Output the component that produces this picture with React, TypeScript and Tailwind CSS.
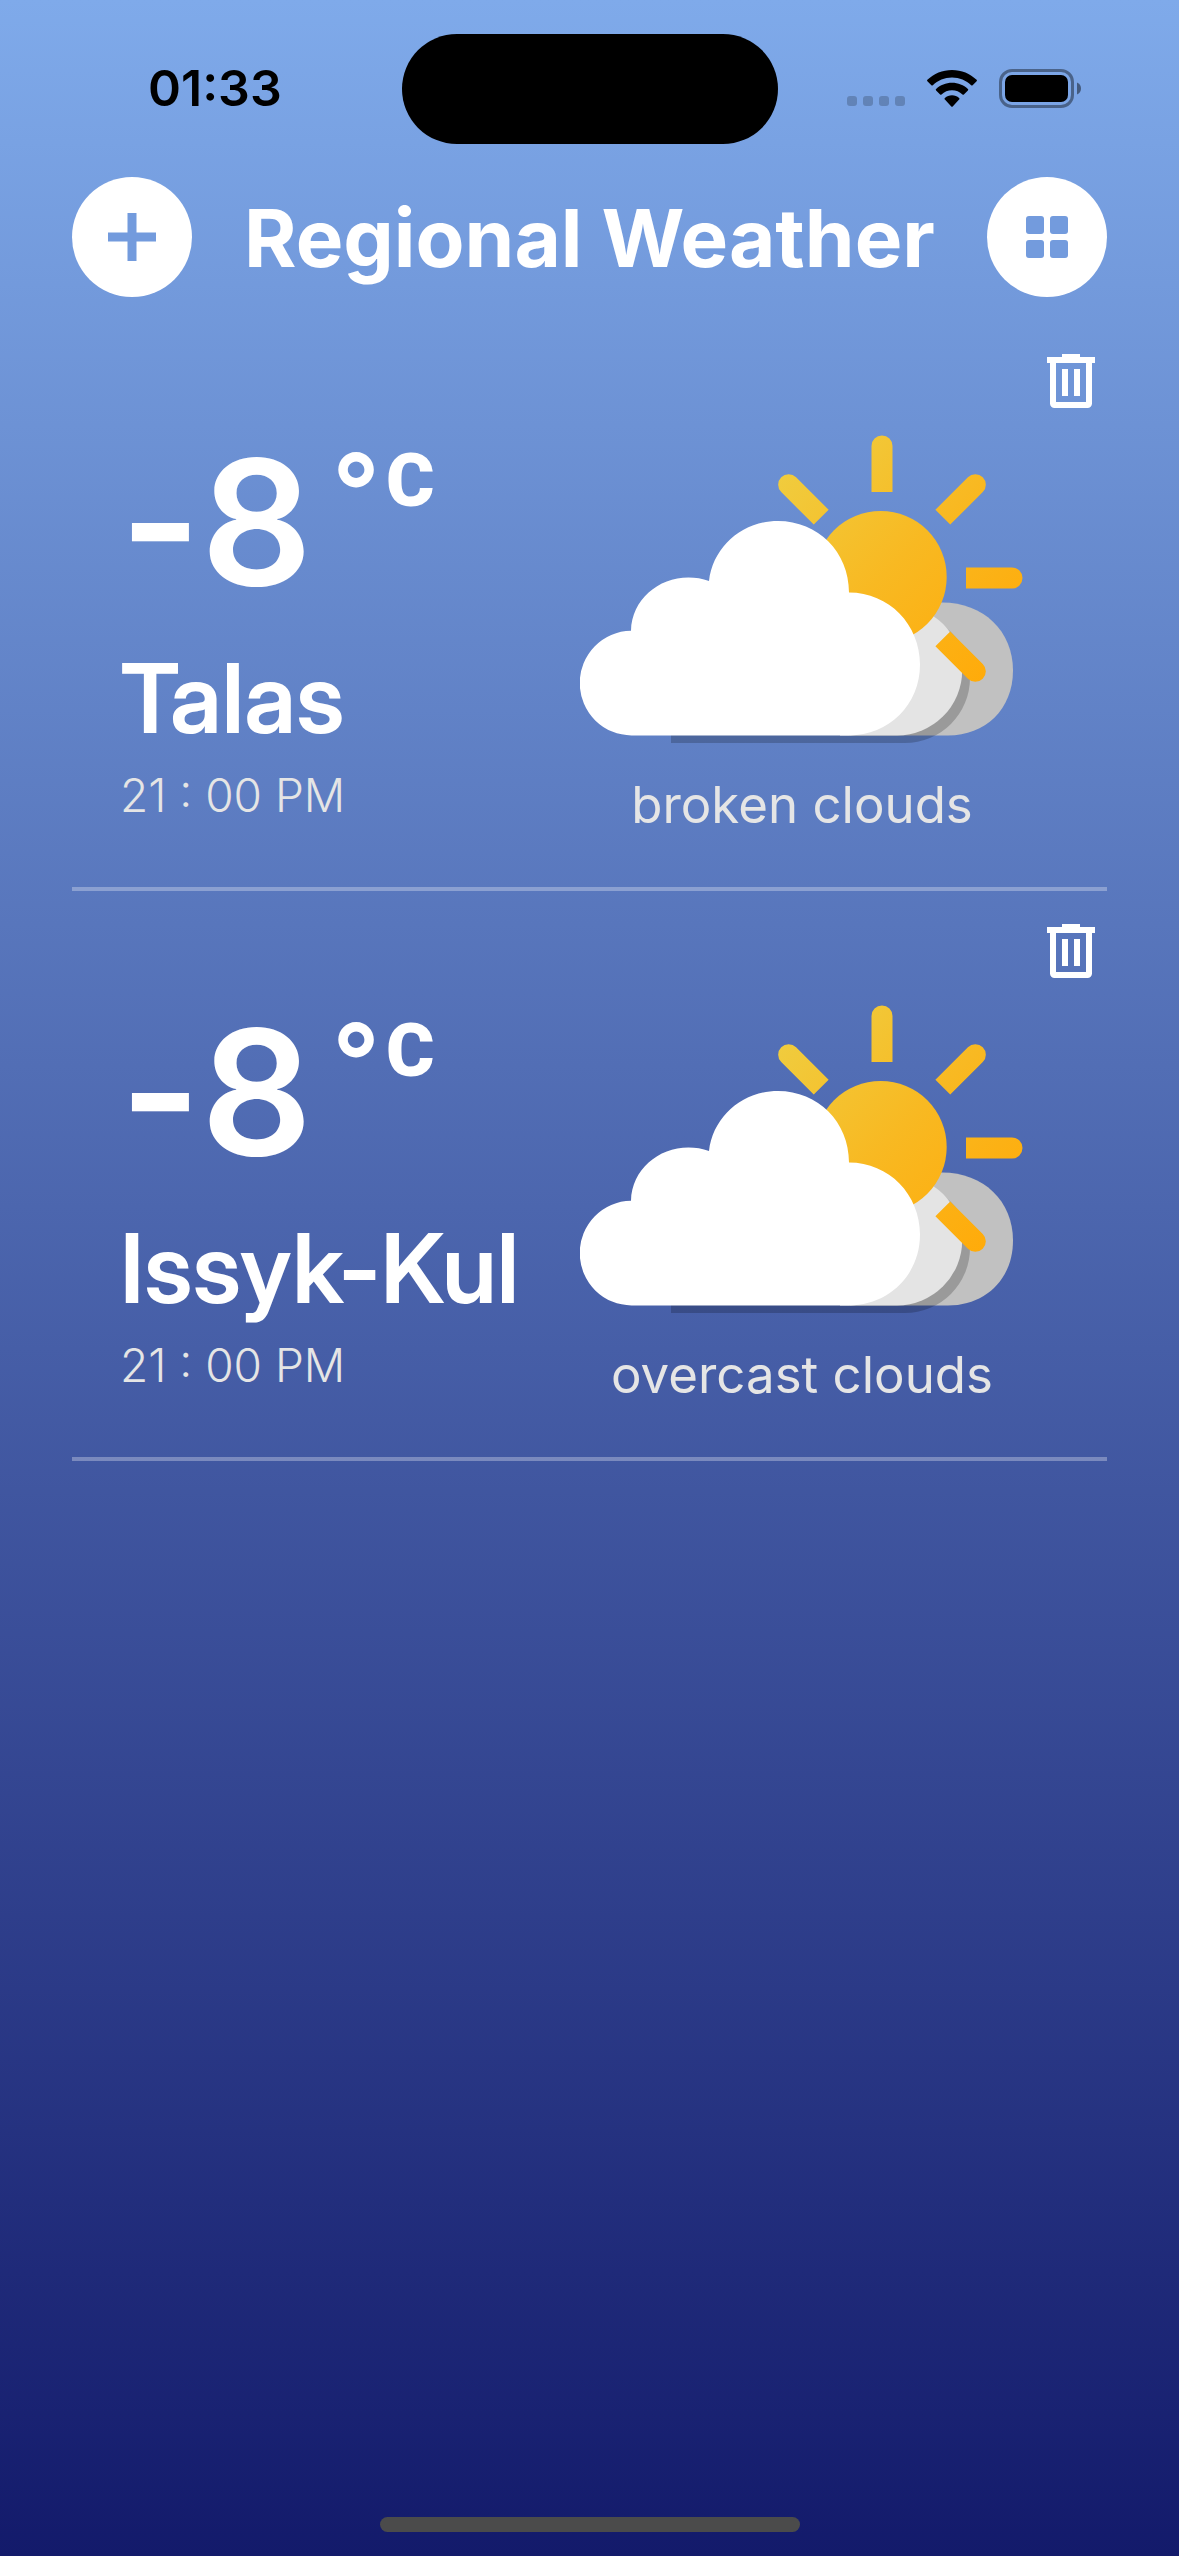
import React from "react";

type Region = { city: string; temp: number; time: string; sky: string };

const regions: Region[] = [
  { city: "Talas", temp: -8, time: "21 : 00 PM", sky: "broken clouds" },
  { city: "Issyk-Kul", temp: -8, time: "21 : 00 PM", sky: "overcast clouds" },
];

function WifiIcon() {
  return (
    <svg viewBox="0 0 50 37" className="h-[37px] w-[50px]" fill="currentColor" aria-hidden="true">
      <path d="M25 0C15.500 0 6.800 3.700 0.400 9.800a1 1 0 0 0 0 1.400l4 4a1 1 0 0 0 1.400 0C10.800 10.500 17.500 7.600 25 7.600s14.200 2.900 19.200 7.600a1 1 0 0 0 1.400 0l4-4a1 1 0 0 0 0-1.400C43.200 3.700 34.500 0 25 0z" />
      <path d="M25 12.700c-6.100 0-11.700 2.300-15.900 6.200a1 1 0 0 0 0 1.500l4 4a1 1 0 0 0 1.400 0c2.800-2.500 6.500-4.100 10.500-4.100s7.700 1.600 10.500 4.100a1 1 0 0 0 1.400 0l4-4a1 1 0 0 0 0-1.500c-4.200-3.900-9.800-6.200-15.900-6.200z" />
      <path d="M25 25.300c-2.700 0-5.200 1-7.100 2.600a1 1 0 0 0 0 1.500l6.400 7a1 1 0 0 0 1.400 0l6.400-7a1 1 0 0 0 0-1.500c-1.900-1.600-4.400-2.600-7.100-2.600z" />
    </svg>
  );
}

function BatteryIcon() {
  return (
    <svg viewBox="0 0 82 39" className="h-[39px] w-[82px]" aria-hidden="true">
      <rect x="1.500" y="1.500" width="72" height="36" rx="11.500" fill="none" stroke="#000" strokeOpacity="0.4" strokeWidth="3" />
      <rect x="6" y="6" width="63" height="27" rx="7" />
      <path d="M78 13.500c2.500 1 4 3.300 4 6s-1.500 5-4 6z" fillOpacity="0.45" />
    </svg>
  );
}

function StatusBar() {
  return (
    <div className="grid h-[177px] grid-cols-[1fr_376px_1fr] items-start pt-[34px] text-black">
      <div className="flex h-[108px] items-center pl-[148px] text-[50px] leading-[50px] font-semibold">
        01:33
      </div>
      <div className="h-[110px] rounded-full bg-black" />
      <div className="flex h-[108px] items-center justify-end pr-[98px]">
        <div className="mt-[26px] mr-[22px] flex gap-[6px]">
          {[0, 1, 2, 3].map((n) => (
            <span key={n} className="size-[10px] rounded-[3px] bg-black/20" />
          ))}
        </div>
        <WifiIcon />
        <div className="w-[22px]" />
        <BatteryIcon />
      </div>
    </div>
  );
}

function Header() {
  return (
    <header className="flex items-center justify-between px-[72px]">
      <button
        type="button"
        aria-label="Add region"
        className="flex size-[120px] items-center justify-center rounded-full bg-white text-[#739bdd]"
      >
        <svg viewBox="0 0 48 48" className="size-[48px]" fill="currentColor" aria-hidden="true">
          <path d="M19.500 0h9v19.500H48v9H28.500V48h-9V28.500H0v-9h19.500z" />
        </svg>
      </button>
      <h1 className="pt-[2px] text-[80px] leading-[100px] font-bold whitespace-nowrap text-white">
        Regional Weather
      </h1>
      <button
        type="button"
        aria-label="Grid view"
        className="flex size-[120px] items-center justify-center rounded-full bg-white text-[#739bdd]"
      >
        <svg viewBox="0 0 42 42" className="size-[42px]" fill="currentColor" aria-hidden="true">
          <rect width="18" height="18" rx="3" />
          <rect x="24" width="18" height="18" rx="3" />
          <rect y="24" width="18" height="18" rx="3" />
          <rect x="24" y="24" width="18" height="18" rx="3" />
        </svg>
      </button>
    </header>
  );
}

function TrashIcon() {
  return (
    <svg viewBox="0 0 16 18" className="h-[54px] w-[48px]" fill="currentColor" aria-hidden="true">
      <path
        fillRule="evenodd"
        d="M5 0h6v1h5v2h-1v13.500A1.500 1.500 0 0 1 13.500 18h-11A1.500 1.500 0 0 1 1 16.500V3H0V1h5zM3 3v13h10V3z"
      />
      <path d="M5 5h2v9H5zM9 5h2v9H9z" />
    </svg>
  );
}

function CloudySun({ id }: { id: string }) {
  const ray = "M871.500 492V446a10.500 10.500 0 0 1 21 0v46z";
  return (
    <svg viewBox="580 435 444 310" className="h-[310px] w-[444px]" aria-hidden="true">
      <defs>
        <linearGradient id={`${id}-sun`} gradientUnits="userSpaceOnUse" x1="778" y1="476" x2="982" y2="680">
          <stop offset="0" stopColor="#f0cc3e" />
          <stop offset="0.500" stopColor="#f8b922" />
          <stop offset="1" stopColor="#ffab0a" />
        </linearGradient>
        <clipPath id={`${id}-rays`}>
          <path d={ray} />
          <path d={ray} transform="rotate(-45 882 578)" />
          <path d={ray} transform="rotate(45 882 578)" />
          <path d={ray} transform="rotate(90 881 577)" />
          <path d={ray} transform="rotate(135 882 578)" />
        </clipPath>
      </defs>
      <path d="M850 602.500h92c42 0 71 29 71 68s-28 65-65 65h-98z" fill="#c1c1c1" />
      <path d="M671 743V700h229v-87h5a65 65 0 0 1 0 130z" fillOpacity="0.2" />
      <path d="M840 605h57a65 65 0 0 1 0 130.400h-57z" fill="#e4e4e4" />
      <circle cx="880.700" cy="577" r="66" fill={`url(#${id}-sun)`} />
      <path
        d="M632 735.400a51.700 52.300 0 0 1-1-104.700c1-31 27-53.200 57.500-53.200 7 0 14 1 20.500 3.500C713 547 742 521 778 521c40 0 71 31 71 71.500 40 0 71 32 71 72s-31 70.900-71 70.900z"
        fill="#fff"
      />
      <rect x="580" y="435" width="444" height="310" fill={`url(#${id}-sun)`} clipPath={`url(#${id}-rays)`} />
    </svg>
  );
}

function RegionCard({ region, id }: { region: Region; id: string }) {
  return (
    <li className="border-b-4 border-white/30 pt-[33px] pb-[56px]">
      <div className="flex justify-end pr-3">
        <button type="button" aria-label={`Delete ${region.city}`} className="text-white">
          <TrashIcon />
        </button>
      </div>
      <div className="mt-[27px] flex items-start justify-between pr-[83px] pl-[48px]">
        <div className="text-white">
          <div className="flex items-start gap-[20px]">
            <span className="text-[174px] leading-[174px] font-semibold [font-feature-settings:'calt'_0]">
              {region.temp}
            </span>
            <span className="flex items-start gap-[6px] pt-[10px]">
              <span className="text-[104px] leading-[90px] font-semibold">°</span>
              <span className="font-[Roboto] text-[74px] leading-[72px] font-black">C</span>
            </span>
          </div>
          <h2 className="mt-[42px] font-['Inter_Display',Inter,sans-serif] text-[96px] leading-[94px] font-semibold whitespace-nowrap">
            {region.city}
          </h2>
          <p className="mt-[27px] text-[46px] leading-[47px] font-light text-[#e5e5e5]">
            {region.time}
          </p>
        </div>
        <div className="flex flex-col items-center">
          <CloudySun id={id} />
          <p className="mt-[34px] text-[51px] leading-[52px] whitespace-nowrap text-[#e5e5e5]">
            {region.sky}
          </p>
        </div>
      </div>
    </li>
  );
}

export default function App() {
  return (
    <div className="flex min-h-screen flex-col bg-linear-to-b/srgb from-[#7faaea] to-[#131a6b] font-[Inter,sans-serif]">
      <StatusBar />
      <Header />
      <main className="mt-6 flex-1 px-[72px]">
        <ul>
          {regions.map((region, i) => (
            <RegionCard key={region.city} region={region} id={`sky-${i}`} />
          ))}
        </ul>
      </main>
      <div className="mb-6 h-[15px] w-[420px] self-center rounded-full bg-[#4b4b4b]" />
    </div>
  );
}
